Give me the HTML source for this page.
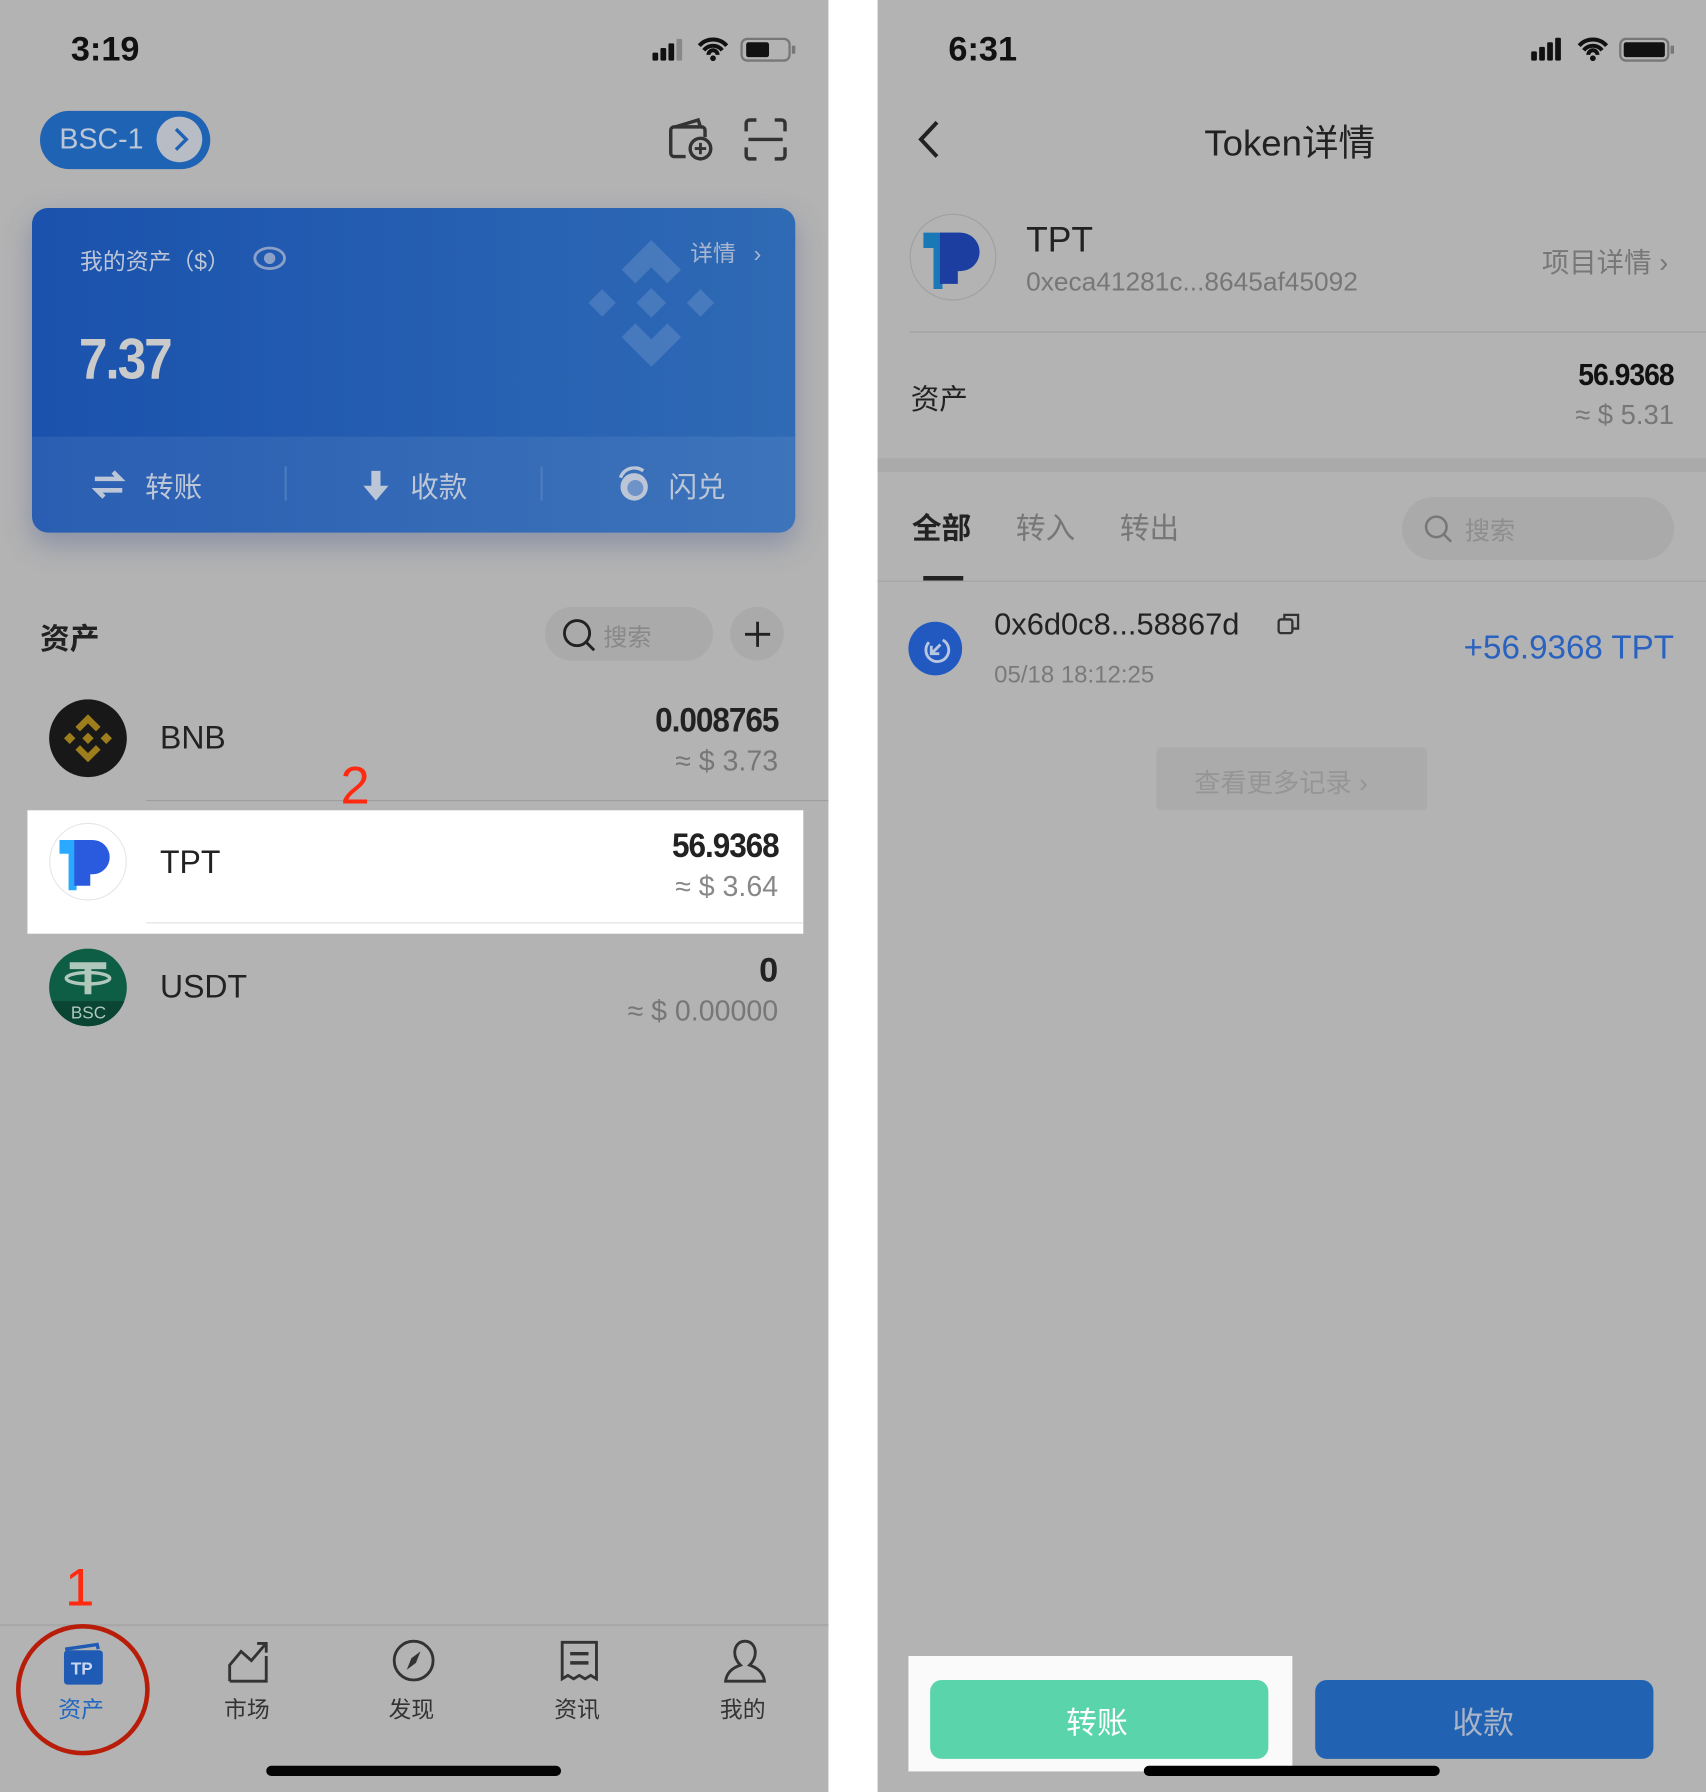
<!DOCTYPE html>
<html><head><meta charset="utf-8"><style>
html,body{margin:0;padding:0;width:1706px;height:1792px;overflow:hidden;background:#fff}
#s{position:absolute;left:0;top:0;width:1493px;height:1568px;transform:scale(1.142666,1.142857);transform-origin:0 0;font-family:"Liberation Sans","Noto Sans CJK SC",sans-serif}
.a{position:absolute;white-space:nowrap}
.p{position:absolute;top:0;height:1568px;background:#b3b3b3}
.r{text-align:right}
</style></head><body><div id="s">
<div class="p" style="left:0;width:725px"></div>
<div class="p" style="left:768px;width:725px"></div>

<!-- LEFT -->
<div class="a" style="left:62px;top:27px;font-size:30px;font-weight:bold;color:#111">3:19</div>
<svg class="a" style="left:568px;top:30px" width="130" height="26" viewBox="0 0 130 26">
<rect x="3" y="16" width="5" height="7" rx="1" fill="#111"/><rect x="10" y="12" width="5" height="11" rx="1" fill="#111"/><rect x="17" y="8" width="5" height="15" rx="1" fill="#111"/><rect x="24" y="4" width="5" height="19" rx="1" fill="#888"/>
<path d="M44 10a16 16 0 0 1 24 0M48 14a10 10 0 0 1 16 0M52 18a4 4 0 0 1 8 0" stroke="#111" stroke-width="3.5" fill="none"/><circle cx="56" cy="21" r="2.5" fill="#111"/>
<rect x="81" y="4" width="42" height="19" rx="5" stroke="#777" stroke-width="2" fill="none"/><rect x="85" y="7" width="20" height="13" rx="2" fill="#111"/><rect x="125" y="10" width="3" height="7" fill="#777"/></svg>
<div class="a" style="left:35px;top:97px;width:149px;height:51px;border-radius:26px;background:#1f63b5"></div>
<div class="a" style="left:52px;top:108px;font-size:25px;color:#bcc6d6">BSC-1</div>
<div class="a" style="left:137px;top:102px;width:40px;height:40px;border-radius:50%;background:#b8bcc4"></div>
<svg class="a" style="left:148px;top:110px" width="20" height="24"><path d="M6 3l9 9-9 9" stroke="#1f63b5" stroke-width="3" fill="none"/></svg>
<svg class="a" style="left:584px;top:102px" width="42" height="40" viewBox="0 0 42 40"><path d="M16 35H6a3 3 0 0 1-3-3V12a3 3 0 0 1 3-3h24a3 3 0 0 1 3 3v6M7 9l20-6 2 6" stroke="#333" stroke-width="3" fill="none"/><circle cx="29" cy="28" r="9" stroke="#333" stroke-width="3" fill="none"/><path d="M29 23v10M24 28h10" stroke="#333" stroke-width="2.5"/></svg>
<svg class="a" style="left:650px;top:103px" width="40" height="38" viewBox="0 0 40 38"><path d="M3 12V5a3 3 0 0 1 3-3h6M28 2h6a3 3 0 0 1 3 3v7M37 26v7a3 3 0 0 1-3 3h-6M12 36H6a3 3 0 0 1-3-3v-7M5 19h30" stroke="#333" stroke-width="3" fill="none"/></svg>

<div class="a" style="left:28px;top:182px;width:668px;height:284px;border-radius:14px;background:linear-gradient(90deg,#1a52ad,#2f6ab5);box-shadow:0 10px 24px rgba(60,80,140,.35);overflow:hidden">
 <div style="position:absolute;left:0;top:200px;width:100%;height:84px;background:rgba(255,255,255,.07)"></div>
</div>
<svg class="a" style="left:513px;top:208px" width="115" height="115" viewBox="0 0 115 115" opacity=".13"><path d="M57 2l26 26-12 12-14-14-14 14-12-12zM2 57l12-12 12 12-12 12zM57 44l13 13-13 13-13-13zM88 57l12-12 12 12-12 12zM57 113L31 87l12-12 14 14 14-14 12 12z" fill="#fff"/></svg>
<div class="a" style="left:70px;top:213px;font-size:20px;color:#bec7d8">我的资产（$）</div>
<svg class="a" style="left:221px;top:214px" width="30" height="24"><ellipse cx="15" cy="12" rx="13" ry="9" stroke="#8aa0c8" stroke-width="2.5" fill="none"/><circle cx="15" cy="12" r="5" fill="#8aa0c8"/></svg>
<div class="a" style="left:604px;top:206px;font-size:20px;color:#a9b6cf">详情 <span style="margin-left:10px">›</span></div>
<div class="a" style="left:69px;top:285px;font-size:50px;font-weight:bold;color:#cacaca;letter-spacing:-2px;transform:scaleX(.9);transform-origin:0 0">7.37</div>
<svg class="a" style="left:80px;top:410px" width="30" height="28"><path d="M3 9h22l-6-6M27 19H5l6 6" stroke="#bcc6d6" stroke-width="4" fill="none"/></svg>
<div class="a" style="left:127px;top:407px;font-size:25px;color:#bcc6d6">转账</div>
<div class="a" style="left:249px;top:408px;width:2px;height:30px;background:#4a7cc0"></div>
<svg class="a" style="left:316px;top:410px" width="26" height="30"><path d="M9 2h8v13h7L13 28 2 15h7z" fill="#bcc6d6"/></svg>
<div class="a" style="left:359px;top:407px;font-size:25px;color:#bcc6d6">收款</div>
<div class="a" style="left:473px;top:408px;width:2px;height:30px;background:#4a7cc0"></div>
<svg class="a" style="left:538px;top:408px" width="32" height="32"><circle cx="17" cy="18" r="12" fill="#bcc6d6"/><circle cx="18" cy="19" r="7" fill="#6f93c9"/><path d="M5 10a13 13 0 0 1 20-6" stroke="#bcc6d6" stroke-width="3" fill="none"/></svg>
<div class="a" style="left:585px;top:407px;font-size:25px;color:#bcc6d6">闪兑</div>

<div class="a" style="left:35px;top:539px;font-size:26px;font-weight:bold;color:#222">资产</div>
<div class="a" style="left:477px;top:531px;width:147px;height:47px;border-radius:24px;background:#aaaaaa"></div>
<svg class="a" style="left:490px;top:540px" width="34" height="32"><circle cx="15" cy="14" r="11" stroke="#222" stroke-width="2.5" fill="none"/><path d="M23 22l7 7" stroke="#222" stroke-width="2.5"/></svg>
<div class="a" style="left:528px;top:542px;font-size:21px;color:#888">搜索</div>
<div class="a" style="left:639px;top:531px;width:47px;height:47px;border-radius:50%;background:#aaaaaa"></div>
<svg class="a" style="left:650px;top:542px" width="26" height="26"><path d="M13 2v22M2 13h22" stroke="#222" stroke-width="2.5"/></svg>

<!-- BNB -->
<div class="a" style="left:43px;top:612px;width:68px;height:68px;border-radius:50%;background:#181818"></div>
<svg class="a" style="left:53px;top:622px" width="48" height="48" viewBox="0 0 48 48"><path d="M24 3l11 11-4 4-7-7-7 7-4-4zM3 24l5-5 5 5-5 5zM24 19l5 5-5 5-5-5zM35 24l5-5 5 5-5 5zM24 45L13 34l4-4 7 7 7-7 4 4z" fill="#9e7e1c"/></svg>
<div class="a" style="left:140px;top:630px;font-size:28px;color:#222">BNB</div>
<div class="a r" style="right:812px;top:614px;font-size:30px;font-weight:bold;color:#222;letter-spacing:-1px;transform:scaleX(.92);transform-origin:100% 0">0.008765</div>
<div class="a r" style="right:812px;top:652px;font-size:25px;color:#777">≈ $ 3.73</div>
<div class="a" style="left:128px;top:700px;width:597px;height:1px;background:#9d9d9d"></div>
<div class="a" style="left:298px;top:660px;font-size:46px;color:#ff2a10">2</div>
<!-- TPT -->
<div class="a" style="left:24px;top:709px;width:679px;height:108px;background:#fff"></div>
<div class="a" style="left:128px;top:807px;width:575px;height:1px;background:#e0e0e0"></div>
<div class="a" style="left:43px;top:720px;width:66px;height:66px;border-radius:50%;border:1px solid #e6e6e6;background:#fff"></div>
<svg class="a" style="left:52px;top:730px" width="50" height="50" viewBox="0 0 50 50"><path d="M0 5h28v12H15v32H8V17H0z" fill="#29a9ff"/><path d="M13 5h16a15 15 0 0 1 0 30h-2v10H13z" fill="#2a5bdf"/></svg>
<div class="a" style="left:140px;top:739px;font-size:28px;color:#222">TPT</div>
<div class="a r" style="right:812px;top:724px;font-size:30px;font-weight:bold;color:#222;letter-spacing:-1px;transform:scaleX(.92);transform-origin:100% 0">56.9368</div>
<div class="a r" style="right:812px;top:762px;font-size:25px;color:#888">≈ $ 3.64</div>
<!-- USDT -->
<div class="a" style="left:43px;top:830px;width:68px;height:68px;border-radius:50%;background:#0e5d45;overflow:hidden"><div style="position:absolute;left:0;top:46px;width:68px;height:22px;background:#0a4433"></div></div>
<svg class="a" style="left:53px;top:836px" width="48" height="40"><path d="M8 6h32v6H27v22h-6V12H8z" fill="#b0c8bc"/><ellipse cx="24" cy="20" rx="19" ry="5" stroke="#b0c8bc" stroke-width="3" fill="none"/></svg>
<div class="a" style="left:62px;top:878px;font-size:15px;color:#b0c8bc">BSC</div>
<div class="a" style="left:140px;top:848px;font-size:28px;color:#222">USDT</div>
<div class="a r" style="right:812px;top:833px;font-size:30px;font-weight:bold;color:#222">0</div>
<div class="a r" style="right:812px;top:871px;font-size:25px;color:#777">≈ $ 0.00000</div>

<div class="a" style="left:57px;top:1362px;font-size:46px;color:#ff2a10">1</div>
<div class="a" style="left:0;top:1421px;width:725px;height:2px;background:#a8a8a8"></div>
<svg class="a" style="left:54px;top:1435px" width="38" height="40"><path d="M3 8l28-4 1 4" stroke="#1f5bb5" stroke-width="3" fill="none"/><rect x="2" y="9" width="34" height="30" rx="3" fill="#1f5bb5"/><text x="8" y="30" font-size="15" font-weight="bold" fill="#c8d6ee" font-family="Liberation Sans">TP</text></svg>
<div class="a" style="left:51px;top:1480px;font-size:20px;color:#2167c2">资产</div>
<svg class="a" style="left:198px;top:1433px" width="40" height="40"><path d="M3 38V24l10-12 9 8L34 6M27 5h8v8M3 38h32V16" stroke="#333" stroke-width="2.5" fill="none"/></svg>
<div class="a" style="left:196px;top:1480px;font-size:20px;color:#333">市场</div>
<svg class="a" style="left:342px;top:1433px" width="40" height="40"><circle cx="20" cy="20" r="17" stroke="#333" stroke-width="2.5" fill="none"/><path d="M26 12l-4 10-8 6 4-10z" fill="#333"/></svg>
<div class="a" style="left:340px;top:1480px;font-size:20px;color:#333">发现</div>
<svg class="a" style="left:489px;top:1433px" width="36" height="40"><path d="M3 36V4h30v32l-5-3-5 3-5-3-5 3-5-3z" stroke="#333" stroke-width="2.5" fill="none"/><path d="M10 14h16M10 22h16" stroke="#333" stroke-width="3"/></svg>
<div class="a" style="left:485px;top:1480px;font-size:20px;color:#333">资讯</div>
<svg class="a" style="left:632px;top:1433px" width="40" height="40"><path d="M20 3c-6 0-9 5-9 10s3 9 5 11c-6 2-12 6-13 14h34c-1-8-7-12-13-14 2-2 5-6 5-11S26 3 20 3z" stroke="#333" stroke-width="2.5" fill="none"/></svg>
<div class="a" style="left:630px;top:1480px;font-size:20px;color:#333">我的</div>
<div class="a" style="left:14px;top:1421px;width:117px;height:115px;border:4px solid #b81d0a;border-radius:50%;box-sizing:border-box"></div>
<div class="a" style="left:233px;top:1545px;width:258px;height:9px;border-radius:5px;background:#050505"></div>

<!-- RIGHT -->
<div class="a" style="left:830px;top:27px;font-size:30px;font-weight:bold;color:#111">6:31</div>
<svg class="a" style="left:1336px;top:30px" width="130" height="26" viewBox="0 0 130 26">
<rect x="4" y="15" width="5" height="8" rx="1" fill="#111"/><rect x="11" y="11" width="5" height="12" rx="1" fill="#111"/><rect x="18" y="7" width="5" height="16" rx="1" fill="#111"/><rect x="25" y="3" width="5" height="20" rx="1" fill="#111"/>
<path d="M46 10a16 16 0 0 1 24 0M50 14a10 10 0 0 1 16 0M54 18a4 4 0 0 1 8 0" stroke="#111" stroke-width="3.5" fill="none"/><circle cx="58" cy="21" r="2.5" fill="#111"/>
<rect x="82" y="4" width="42" height="19" rx="5" stroke="#777" stroke-width="2" fill="none"/><rect x="85" y="7" width="36" height="13" rx="2" fill="#111"/><rect x="126" y="10" width="3" height="7" fill="#777"/></svg>
<svg class="a" style="left:800px;top:104px" width="26" height="36"><path d="M20 3L6 18l14 15" stroke="#222" stroke-width="3.5" fill="none"/></svg>
<div class="a" style="left:1054px;top:100px;font-size:32px;color:#222">Token详情</div>
<div class="a" style="left:796px;top:187px;width:76px;height:76px;border-radius:50%;border:1px solid #a0a0a0;box-sizing:border-box"></div>
<svg class="a" style="left:808px;top:198px" width="56" height="56" viewBox="0 0 50 50"><path d="M0 5h28v12H15v32H8V17H0z" fill="#1b78b7"/><path d="M13 5h16a15 15 0 0 1 0 30h-2v10H13z" fill="#1c3ea0"/></svg>
<div class="a" style="left:898px;top:192px;font-size:31px;color:#222">TPT</div>
<div class="a" style="left:898px;top:233px;font-size:23px;color:#777">0xeca41281c...8645af45092</div>
<div class="a r" style="right:33px;top:210px;font-size:24px;color:#777">项目详情 ›</div>
<div class="a" style="left:796px;top:290px;width:697px;height:1px;background:#9f9f9f"></div>
<div class="a" style="left:797px;top:330px;font-size:25px;color:#222">资产</div>
<div class="a r" style="right:28px;top:313px;font-size:27px;font-weight:bold;color:#111;letter-spacing:-1px;transform:scaleX(.92);transform-origin:100% 0">56.9368</div>
<div class="a r" style="right:28px;top:350px;font-size:24px;color:#777">≈ $ 5.31</div>
<div class="a" style="left:768px;top:401px;width:725px;height:12px;background:#aaaaaa"></div>
<div class="a" style="left:798px;top:442px;font-size:26px;font-weight:bold;color:#222">全部</div>
<div class="a" style="left:889px;top:442px;font-size:26px;color:#777">转入</div>
<div class="a" style="left:980px;top:442px;font-size:26px;color:#777">转出</div>
<div class="a" style="left:808px;top:504px;width:35px;height:4px;background:#222"></div>
<div class="a" style="left:768px;top:508px;width:725px;height:1px;background:#a3a3a3"></div>
<div class="a" style="left:1227px;top:435px;width:238px;height:55px;border-radius:28px;background:#aaaaaa"></div>
<svg class="a" style="left:1245px;top:449px" width="28" height="28"><circle cx="12" cy="12" r="9" stroke="#777" stroke-width="2.2" fill="none"/><path d="M19 19l6 6" stroke="#777" stroke-width="2.2"/></svg>
<div class="a" style="left:1282px;top:447px;font-size:22px;color:#8e8e8e">搜索</div>
<div class="a" style="left:795px;top:544px;width:47px;height:47px;border-radius:50%;background:#2159c0"></div>
<svg class="a" style="left:803px;top:552px" width="32" height="32"><path d="M22 8a10 10 0 1 1-12 2M20 12l-8 8M12 13v7h7" stroke="#b8c6e0" stroke-width="2.5" fill="none"/></svg>
<div class="a" style="left:870px;top:531px;font-size:27px;color:#222">0x6d0c8...58867d</div>
<svg class="a" style="left:1116px;top:534px" width="24" height="24"><rect x="3" y="8" width="12" height="12" rx="2" stroke="#333" stroke-width="2" fill="none"/><path d="M8 8V4h12v12h-5" stroke="#333" stroke-width="2" fill="none"/></svg>
<div class="a" style="left:870px;top:579px;font-size:21px;color:#7a7a7a">05/18 18:12:25</div>
<div class="a r" style="right:28px;top:551px;font-size:29px;color:#2a62c0">+56.9368 TPT</div>
<div class="a" style="left:1012px;top:654px;width:237px;height:55px;border-radius:4px;background:#ababab"></div>
<div class="a" style="left:1045px;top:666px;font-size:23px;color:#959595">查看更多记录 ›</div>

<div class="a" style="left:795px;top:1449px;width:336px;height:101px;background:#fafafa"></div>
<div class="a" style="left:814px;top:1470px;width:296px;height:69px;border-radius:10px;background:#5ad4aa"></div>
<div class="a" style="left:933px;top:1486px;font-size:27px;color:#fff">转账</div>
<div class="a" style="left:1151px;top:1470px;width:296px;height:69px;border-radius:10px;background:#2163b2"></div>
<div class="a" style="left:1271px;top:1486px;font-size:27px;color:#aab4c8">收款</div>
<div class="a" style="left:1001px;top:1545px;width:259px;height:9px;border-radius:5px;background:#000"></div>
</div></body></html>
